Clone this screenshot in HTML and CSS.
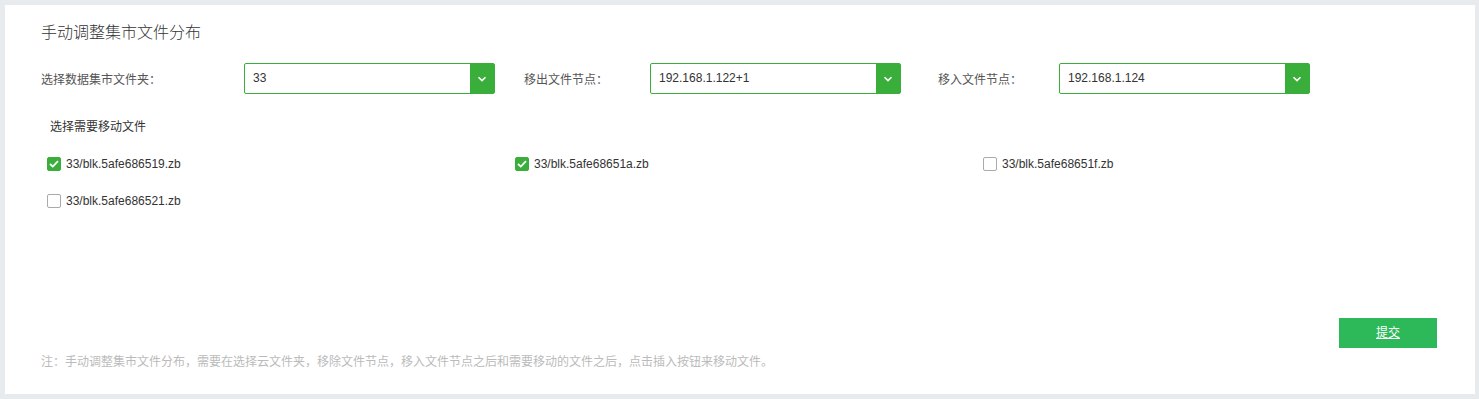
FILE: index.html
```html
<!DOCTYPE html>
<html lang="zh-CN">
<head>
    <meta charset="UTF-8">
    <title>手动调整集市文件分布</title>
    <link rel="stylesheet" href="styles.css">
</head>
<body>
    <div class="panel">
        <h1>手动调整集市文件分布</h1>

        <div class="select-row">
            <div class="field field-first">
                <label class="field-label">选择数据集市文件夹：</label>
                <div class="select">
                    <span class="select-value">33</span>
                    <span class="select-btn"><svg width="10" height="6" viewBox="0 0 10 6"><path d="M1.5 1.2 L5 4.6 L8.5 1.2" fill="none" stroke="#fff" stroke-width="1.6"/></svg></span>
                </div>
            </div>
            <div class="field field-second">
                <label class="field-label">移出文件节点：</label>
                <div class="select">
                    <span class="select-value">192.168.1.122+1</span>
                    <span class="select-btn"><svg width="10" height="6" viewBox="0 0 10 6"><path d="M1.5 1.2 L5 4.6 L8.5 1.2" fill="none" stroke="#fff" stroke-width="1.6"/></svg></span>
                </div>
            </div>
            <div class="field field-third">
                <label class="field-label">移入文件节点：</label>
                <div class="select">
                    <span class="select-value">192.168.1.124</span>
                    <span class="select-btn"><svg width="10" height="6" viewBox="0 0 10 6"><path d="M1.5 1.2 L5 4.6 L8.5 1.2" fill="none" stroke="#fff" stroke-width="1.6"/></svg></span>
                </div>
            </div>
        </div>

        <div class="files-title">选择需要移动文件</div>

        <div class="file-grid">
            <label class="file-item"><span class="check checked"><svg width="10" height="8" viewBox="0 0 10 8"><path d="M1 4 L3.8 6.6 L9 1.2" fill="none" stroke="#fff" stroke-width="1.8"/></svg></span>33/blk.5afe686519.zb</label>
            <label class="file-item"><span class="check checked"><svg width="10" height="8" viewBox="0 0 10 8"><path d="M1 4 L3.8 6.6 L9 1.2" fill="none" stroke="#fff" stroke-width="1.8"/></svg></span>33/blk.5afe68651a.zb</label>
            <label class="file-item"><span class="check"></span>33/blk.5afe68651f.zb</label>
            <label class="file-item"><span class="check"></span>33/blk.5afe686521.zb</label>
        </div>

        <div class="actions">
            <a href="#" class="submit-btn">提交</a>
        </div>

        <p class="note">注：手动调整集市文件分布，需要在选择云文件夹，移除文件节点，移入文件节点之后和需要移动的文件之后，点击插入按钮来移动文件。</p>
    </div>
</body>
</html>
```

FILE: styles.css
```css
body {
    margin: 0;
    padding: 5px 4px 5px 5px;
    background-color: #e8ebee;
    font-family: "Liberation Sans", "Noto Sans CJK SC", sans-serif;
    font-size: 12px;
    color: #333;
}
.panel {
    background: white;
    height: 389px;
    box-sizing: border-box;
    padding: 19px 0 0 36px;
}
h1 {
    margin: 0;
    font-size: 16px;
    font-weight: 300;
    color: #333;
    line-height: 18px;
}
.select-row {
    display: flex;
    margin-top: 21px;
}
.field {
    display: flex;
    align-items: center;
}
.field-label {
    color: #555;
}
.field-first .field-label {
    width: 203px;
}
.field-second {
    margin-left: 29px;
}
.field-second .field-label {
    width: 126px;
}
.field-third {
    margin-left: 37px;
}
.field-third .field-label {
    width: 121px;
}
.select {
    display: flex;
    width: 251px;
    height: 31px;
    box-sizing: border-box;
    border: 1px solid #3aae3a;
    border-radius: 2px;
}
.select-value {
    flex: 1;
    padding-left: 8px;
    line-height: 29px;
    color: #333;
}
.select-btn {
    width: 24px;
    background-color: #3aae3a;
    display: flex;
    align-items: center;
    justify-content: center;
}
.files-title {
    margin: 26px 0 0 9px;
    line-height: 14px;
}
.file-grid {
    display: grid;
    grid-template-columns: 468px 468px 468px;
    row-gap: 23px;
    margin: 23px 0 0 6px;
}
.file-item {
    display: flex;
    align-items: center;
    height: 14px;
    color: #333;
}
.check {
    width: 14px;
    height: 14px;
    box-sizing: border-box;
    border: 1px solid #aaa;
    border-radius: 2px;
    margin-right: 5px;
    display: flex;
    align-items: center;
    justify-content: center;
}
.check.checked {
    background-color: #3aae3a;
    border-color: #3aae3a;
}
.actions {
    display: flex;
    justify-content: flex-end;
    margin: 110px 38px 0 0;
}
.submit-btn {
    display: block;
    width: 98px;
    height: 30px;
    line-height: 30px;
    text-align: center;
    background-color: #2db95a;
    color: white;
    text-decoration: underline;
}
.note {
    margin: 7px 0 0 0;
    color: #bbb;
    line-height: 14px;
}
```
